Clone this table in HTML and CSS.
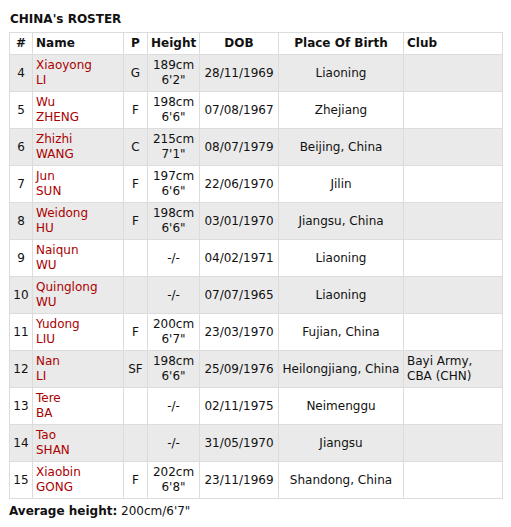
FILE: index.html
```html
<!DOCTYPE html>
<html>
<head>
<meta charset="utf-8">
<link rel="stylesheet" href="styles.css">
</head>
<body>
<div class="roster">
  <h3 class="title">CHINA's ROSTER</h3>
  <table class="tbl">
    <colgroup>
      <col class="c-num"><col class="c-name"><col class="c-pos"><col class="c-ht"><col class="c-dob"><col class="c-pob"><col class="c-club">
    </colgroup>
    <thead>
      <tr><th class="ctr">#</th><th class="lft">Name</th><th class="ctr">P</th><th class="ctr">Height</th><th class="ctr">DOB</th><th class="ctr">Place Of Birth</th><th class="lft">Club</th></tr>
    </thead>
    <tbody>
      <tr class="odd"><td class="ctr">4</td><td class="lft"><a class="pl">Xiaoyong<br>LI</a></td><td class="ctr">G</td><td class="ctr">189cm<br>6'2"</td><td class="ctr">28/11/1969</td><td class="ctr">Liaoning</td><td class="lft"></td></tr>
      <tr><td class="ctr">5</td><td class="lft"><a class="pl">Wu<br>ZHENG</a></td><td class="ctr">F</td><td class="ctr">198cm<br>6'6"</td><td class="ctr">07/08/1967</td><td class="ctr">Zhejiang</td><td class="lft"></td></tr>
      <tr class="odd"><td class="ctr">6</td><td class="lft"><a class="pl">Zhizhi<br>WANG</a></td><td class="ctr">C</td><td class="ctr">215cm<br>7'1"</td><td class="ctr">08/07/1979</td><td class="ctr">Beijing, China</td><td class="lft"></td></tr>
      <tr><td class="ctr">7</td><td class="lft"><a class="pl">Jun<br>SUN</a></td><td class="ctr">F</td><td class="ctr">197cm<br>6'6"</td><td class="ctr">22/06/1970</td><td class="ctr">Jilin</td><td class="lft"></td></tr>
      <tr class="odd"><td class="ctr">8</td><td class="lft"><a class="pl">Weidong<br>HU</a></td><td class="ctr">F</td><td class="ctr">198cm<br>6'6"</td><td class="ctr">03/01/1970</td><td class="ctr">Jiangsu, China</td><td class="lft"></td></tr>
      <tr><td class="ctr">9</td><td class="lft"><a class="pl">Naiqun<br>WU</a></td><td class="ctr"></td><td class="ctr">-/-</td><td class="ctr">04/02/1971</td><td class="ctr">Liaoning</td><td class="lft"></td></tr>
      <tr class="odd"><td class="ctr">10</td><td class="lft"><a class="pl">Quinglong<br>WU</a></td><td class="ctr"></td><td class="ctr">-/-</td><td class="ctr">07/07/1965</td><td class="ctr">Liaoning</td><td class="lft"></td></tr>
      <tr><td class="ctr">11</td><td class="lft"><a class="pl">Yudong<br>LIU</a></td><td class="ctr">F</td><td class="ctr">200cm<br>6'7"</td><td class="ctr">23/03/1970</td><td class="ctr">Fujian, China</td><td class="lft"></td></tr>
      <tr class="odd"><td class="ctr">12</td><td class="lft"><a class="pl">Nan<br>LI</a></td><td class="ctr">SF</td><td class="ctr">198cm<br>6'6"</td><td class="ctr">25/09/1976</td><td class="ctr">Heilongjiang, China</td><td class="lft">Bayi Army,<br>CBA (CHN)</td></tr>
      <tr><td class="ctr">13</td><td class="lft"><a class="pl">Tere<br>BA</a></td><td class="ctr"></td><td class="ctr">-/-</td><td class="ctr">02/11/1975</td><td class="ctr">Neimenggu</td><td class="lft"></td></tr>
      <tr class="odd"><td class="ctr">14</td><td class="lft"><a class="pl">Tao<br>SHAN</a></td><td class="ctr"></td><td class="ctr">-/-</td><td class="ctr">31/05/1970</td><td class="ctr">Jiangsu</td><td class="lft"></td></tr>
      <tr><td class="ctr">15</td><td class="lft"><a class="pl">Xiaobin<br>GONG</a></td><td class="ctr">F</td><td class="ctr">202cm<br>6'8"</td><td class="ctr">23/11/1969</td><td class="ctr">Shandong, China</td><td class="lft"></td></tr>
    </tbody>
  </table>
  <p class="avg"><b>Average height:</b> 200cm/6'7"</p>
</div>
</body>
</html>
```
FILE: styles.css
```css
html, body {
  margin: 0;
  padding: 0;
  background: #fff;
}
.roster {
  padding: 12px 9px 0 9px;
  font-family: "DejaVu Sans", Verdana, sans-serif;
  font-size: 12px;
  line-height: 15px;
  color: #111;
}
.title {
  margin: 0 0 5px 1px;
  font-size: 12px;
  line-height: 15px;
  font-weight: bold;
  color: #111;
}
.tbl {
  border-collapse: collapse;
  table-layout: fixed;
  width: 493px;
}
.c-num { width: 23px; }
.c-name { width: 91px; }
.c-pos { width: 24px; }
.c-ht { width: 52px; }
.c-dob { width: 79px; }
.c-pob { width: 125px; }
.c-club { width: 99px; }
.tbl th, .tbl td {
  border: 1px solid #dcdcdc;
  padding: 3px 3px;
  vertical-align: middle;
  white-space: nowrap;
  overflow: hidden;
}
.tbl th {
  font-weight: bold;
  height: 14px;
  color: #111;
}
.tbl td {
  height: 30px;
}
.tbl .odd td {
  background: #eaeaea;
}
.ctr { text-align: center; }
.lft { text-align: left; }
.pl {
  color: #aa0000;
  text-decoration: none;
}
.avg {
  margin: 5px 0 0 0;
  color: #111;
}
```
